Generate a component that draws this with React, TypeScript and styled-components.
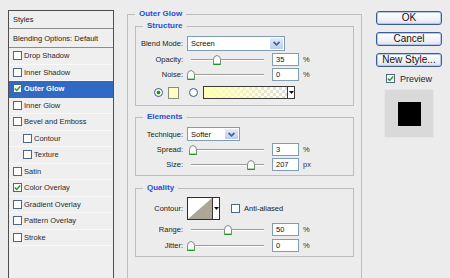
import styled, { createGlobalStyle } from "styled-components";

const GlobalStyle = createGlobalStyle`
  html, body {
    margin: 0;
    padding: 0;
    background: #ececec;
    overflow: hidden;
  }
  body {
    font-family: "Liberation Sans", Arial, sans-serif;
    color: #1e1e1e;
  }
`;

interface Effect {
  name: string;
  checked?: boolean;
  active?: boolean;
  sub?: boolean;
}

const effects: Effect[] = [
  { name: "Drop Shadow" },
  { name: "Inner Shadow" },
  { name: "Outer Glow", checked: true, active: true },
  { name: "Inner Glow" },
  { name: "Bevel and Emboss" },
  { name: "Contour", sub: true },
  { name: "Texture", sub: true },
  { name: "Satin" },
  { name: "Color Overlay", checked: true },
  { name: "Gradient Overlay" },
  { name: "Pattern Overlay" },
  { name: "Stroke" },
];

const CheckMark = () => (
  <svg width="7" height="7" viewBox="0 0 7 7">
    <path d="M0.8 3.4 L2.7 5.4 L6.2 1.4" fill="none" stroke="#1fa01f" strokeWidth="1.5" />
  </svg>
);

const Chevron = () => (
  <svg width="9" height="7" viewBox="0 0 9 7">
    <path d="M1.5 1.8 L4.5 4.8 L7.5 1.8" fill="none" stroke="#4a5f8c" strokeWidth="1.7" />
  </svg>
);

const DownArrow = () => (
  <svg width="5" height="3" viewBox="0 0 5 3">
    <polygon points="0,0 5,0 2.5,3" fill="#111" />
  </svg>
);

const Dialog = styled.div`
  display: flex;
  align-items: flex-start;
  width: 450px;
  height: 278px;
  padding-left: 8px;
  box-sizing: border-box;
  overflow: hidden;
`;

/* ---------- styles list ---------- */

const StyleList = styled.div`
  flex-shrink: 0;
  margin-top: 10px;
  width: 106px;
  height: 290px;
  box-sizing: border-box;
  border: 1px solid #4e4e4e;
  background: #efefef;
`;

const ListHeader = styled.div<{ $h: number }>`
  height: ${({ $h }) => $h}px;
  display: flex;
  align-items: center;
  padding-left: 4px;
  box-sizing: border-box;
  border-bottom: 1px solid #8c8c8c;
  font-size: 7.5px;
  color: #222;
  white-space: nowrap;
`;

const ListItem = styled.div<{ $active?: boolean; $sub?: boolean }>`
  height: 16.5px;
  display: flex;
  align-items: center;
  gap: 2px;
  padding-left: ${({ $sub }) => ($sub ? 14 : 4)}px;
  box-sizing: border-box;
  border-bottom: 1px solid ${({ $active }) => ($active ? "#316ac5" : "#f9f9f9")};
  background: ${({ $active }) => ($active ? "#316ac5" : "transparent")};
  color: ${({ $active }) => ($active ? "#fff" : "#2a2a2a")};
  font-weight: ${({ $active }) => ($active ? 700 : 400)};
  font-size: 7.5px;
  white-space: nowrap;
`;

const CheckBox = styled.span`
  flex-shrink: 0;
  width: 9px;
  height: 9px;
  box-sizing: border-box;
  display: inline-flex;
  align-items: center;
  justify-content: center;
  border: 1px solid #4a6688;
  background: #fff;
`;

/* ---------- group boxes ---------- */

const OuterGroup = styled.fieldset`
  flex-shrink: 0;
  margin: 9px 0 0 13px;
  padding: 0 7px;
  width: 235px;
  height: 300px;
  min-width: 0;
  box-sizing: border-box;
  border: 1px solid #bdbdbd;
`;

const InnerGroup = styled.fieldset<{ $mt: number; $pt: number; $pb: number }>`
  margin: ${({ $mt }) => $mt}px 0 0 0;
  padding: ${({ $pt }) => $pt}px 6px ${({ $pb }) => $pb}px 2px;
  min-width: 0;
  border: 1px solid #bdbdbd;
`;

const GroupTitle = styled.legend<{ $inset?: number }>`
  margin-left: ${({ $inset }) => $inset ?? 0}px;
  padding: 0 4px;
  line-height: 10px;
  font-size: 8px;
  font-weight: 700;
  color: #1f4fd6;
`;

const Row = styled.div<{ $h?: number; $mt?: number }>`
  display: flex;
  align-items: center;
  height: ${({ $h }) => $h ?? 13}px;
  margin-top: ${({ $mt }) => $mt ?? 0}px;
`;

const Label = styled.span`
  flex-shrink: 0;
  width: 45px;
  display: flex;
  justify-content: flex-end;
  white-space: nowrap;
  font-size: 7.5px;
  color: #222;
`;

const Select = styled.div<{ $w: number; $h: number }>`
  display: flex;
  width: ${({ $w }) => $w}px;
  height: ${({ $h }) => $h}px;
  margin-left: 4px;
  box-sizing: border-box;
  border: 1px solid #7f9db9;
  background: #fff;
`;

const SelectText = styled.span`
  flex: 1;
  display: flex;
  align-items: center;
  padding-left: 3px;
  font-size: 7.5px;
  color: #111;
`;

const SelectButton = styled.span`
  width: 13px;
  display: flex;
  align-items: center;
  justify-content: center;
  border: 1px solid #fff;
  background: linear-gradient(#e3ebfb, #bccdf0);
`;

const SliderTrack = styled.div`
  position: relative;
  flex-shrink: 0;
  width: 80px;
  height: 13px;
  margin-left: 4px;

  &::before {
    content: "";
    position: absolute;
    left: 4px;
    right: 3px;
    top: 6px;
    height: 1px;
    background: #9c9c9c;
    border-bottom: 1px solid #fff;
  }
`;

const SliderThumb = styled.svg`
  position: absolute;
  top: 2px;
`;

const ValueField = styled.div`
  width: 27px;
  height: 13px;
  margin-left: 5px;
  box-sizing: border-box;
  padding-left: 3px;
  display: flex;
  align-items: center;
  border: 1px solid #7f9db9;
  background: #fff;
  font-size: 7.5px;
  color: #111;
`;

const Unit = styled.span`
  margin-left: 4px;
  font-size: 7.5px;
  color: #333;
`;

const Radio = styled.span<{ $on?: boolean; $ml: number }>`
  flex-shrink: 0;
  width: 9px;
  height: 9px;
  margin-left: ${({ $ml }) => $ml}px;
  box-sizing: border-box;
  border-radius: 50%;
  border: 1px solid #3d5a84;
  background: ${({ $on }) =>
    $on ? "radial-gradient(circle, #1c9c1c 0 1.7px, #fff 2.2px)" : "#fff"};
`;

const Swatch = styled.span`
  width: 11px;
  height: 12px;
  margin-left: 5px;
  box-sizing: border-box;
  border: 1px solid #8a8a8a;
  background: #ffffbe;
`;

const GradientPicker = styled.div`
  display: flex;
  width: 92px;
  height: 13px;
  margin-left: 5px;
  box-sizing: border-box;
  border: 1px solid #3a3a3a;
`;

const GradientStrip = styled.span`
  flex: 1;
  background:
    linear-gradient(to right, #ffffb4 0%, rgba(255, 255, 180, 0.75) 35%, rgba(255, 255, 180, 0) 100%),
    repeating-conic-gradient(#dcdcdc 0 25%, #ffffff 0 50%) 0 0 / 6px 6px;
`;

const PickerArrow = styled.span`
  width: 6px;
  display: flex;
  align-items: center;
  justify-content: center;
  border-left: 1px solid #3a3a3a;
  background: #fff;
`;

const ContourPicker = styled.div`
  display: flex;
  height: 23px;
  margin-left: 4px;
  box-sizing: border-box;
  border: 1px solid #2e2e2e;
  background: #fff;
`;

const AntiAliasBox = styled(CheckBox)`
  margin-left: 11px;
`;

const OptionText = styled.span`
  margin-left: 4px;
  font-size: 7.5px;
  color: #222;
`;

/* ---------- right column ---------- */

const SideColumn = styled.div`
  flex-shrink: 0;
  display: flex;
  flex-direction: column;
  align-items: center;
  width: 66px;
  margin: 11px 0 0 14px;
`;

const DialogButton = styled.button`
  width: 66px;
  height: 14px;
  margin: 0 0 7px;
  padding: 0;
  box-sizing: border-box;
  border: 1px solid #3c5c98;
  border-radius: 3px;
  box-shadow: inset 0 0 0 1px #b4c8ee;
  background: linear-gradient(#ffffff, #eef0f5 70%, #d9dee8);
  font-family: "Liberation Sans", Arial, sans-serif;
  font-size: 10px;
  line-height: 12px;
  color: #111;
`;

const PreviewToggle = styled.div`
  display: flex;
  align-items: center;
  gap: 5px;
  height: 9px;
  font-size: 9px;
  color: #1c1c3a;
`;

const PreviewFrame = styled.div`
  display: flex;
  align-items: center;
  justify-content: center;
  width: 50px;
  height: 49px;
  margin-top: 6px;
  box-sizing: border-box;
  border: 1px solid #e6e6e6;
  background: #d9d9d9;
`;

const PreviewSquare = styled.div`
  width: 23px;
  height: 24px;
  background: #000;
`;

function Slider({ value }: { value: number }) {
  return (
    <SliderTrack>
      <SliderThumb width="8" height="10" viewBox="0 0 8 10" style={{ left: value * 73 }}>
        <path d="M0.5 9.5 V4.5 Q0.5 1 4 0.5 Q7.5 1 7.5 4.5 V9.5 Z" fill="#fff" stroke="#7c8c7c" />
        <path d="M0.5 9.3 H7.5" stroke="#1f9a1f" strokeWidth="1.4" />
      </SliderThumb>
    </SliderTrack>
  );
}

function SliderRow(props: { label: string; value: number; max: number; unit: string; mt?: number }) {
  return (
    <Row $mt={props.mt}>
      <Label>{props.label}</Label>
      <Slider value={props.value / props.max} />
      <ValueField>{props.value}</ValueField>
      <Unit>{props.unit}</Unit>
    </Row>
  );
}

export default function App() {
  return (
    <>
      <GlobalStyle />
      <Dialog>
        <StyleList>
          <ListHeader $h={18}>Styles</ListHeader>
          <ListHeader $h={19}>Blending Options: Default</ListHeader>
          {effects.map((fx) => (
            <ListItem key={fx.name} $active={fx.active} $sub={fx.sub}>
              <CheckBox>{fx.checked && <CheckMark />}</CheckBox>
              {fx.name}
            </ListItem>
          ))}
        </StyleList>

        <OuterGroup>
          <GroupTitle>Outer Glow</GroupTitle>

          <InnerGroup $mt={2} $pt={5} $pb={6}>
            <GroupTitle $inset={5}>Structure</GroupTitle>
            <Row $h={15}>
              <Label>Blend Mode:</Label>
              <Select $w={98} $h={15}>
                <SelectText>Screen</SelectText>
                <SelectButton>
                  <Chevron />
                </SelectButton>
              </Select>
            </Row>
            <SliderRow label="Opacity:" value={35} max={100} unit="%" mt={2} />
            <SliderRow label="Noise:" value={0} max={100} unit="%" mt={2} />
            <Row $mt={5}>
              <Radio $on $ml={16} />
              <Swatch />
              <Radio $ml={10} />
              <GradientPicker>
                <GradientStrip />
                <PickerArrow>
                  <DownArrow />
                </PickerArrow>
              </GradientPicker>
            </Row>
          </InnerGroup>

          <InnerGroup $mt={6} $pt={5} $pb={4}>
            <GroupTitle $inset={5}>Elements</GroupTitle>
            <Row $h={14}>
              <Label>Technique:</Label>
              <Select $w={53} $h={14}>
                <SelectText>Softer</SelectText>
                <SelectButton>
                  <Chevron />
                </SelectButton>
              </Select>
            </Row>
            <SliderRow label="Spread:" value={3} max={100} unit="%" mt={2} />
            <SliderRow label="Size:" value={207} max={250} unit="px" mt={2} />
          </InnerGroup>

          <InnerGroup $mt={7} $pt={4} $pb={4}>
            <GroupTitle $inset={5}>Quality</GroupTitle>
            <Row $h={23}>
              <Label>Contour:</Label>
              <ContourPicker>
                <svg width="24" height="21" viewBox="0 0 24 21">
                  <polygon points="0,21 24,0 24,21" fill="#aca696" />
                </svg>
                <PickerArrow>
                  <DownArrow />
                </PickerArrow>
              </ContourPicker>
              <AntiAliasBox />
              <OptionText>Anti-aliased</OptionText>
            </Row>
            <SliderRow label="Range:" value={50} max={100} unit="%" mt={3} />
            <SliderRow label="Jitter:" value={0} max={100} unit="%" mt={3} />
          </InnerGroup>
        </OuterGroup>

        <SideColumn>
          <DialogButton>OK</DialogButton>
          <DialogButton>Cancel</DialogButton>
          <DialogButton>New Style...</DialogButton>
          <PreviewToggle>
            <CheckBox>
              <CheckMark />
            </CheckBox>
            Preview
          </PreviewToggle>
          <PreviewFrame>
            <PreviewSquare />
          </PreviewFrame>
        </SideColumn>
      </Dialog>
    </>
  );
}
